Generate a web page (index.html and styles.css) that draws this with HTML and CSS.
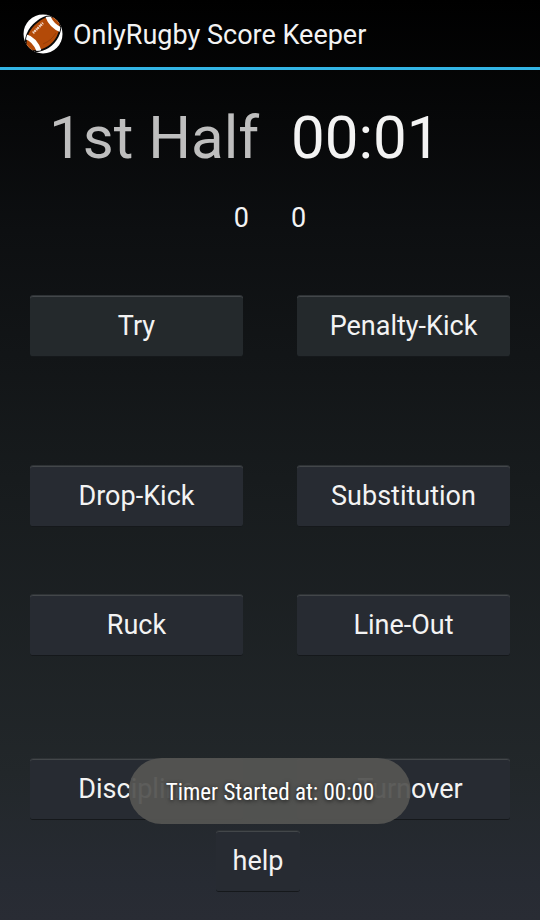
FILE: index.html
```html
<!DOCTYPE html>
<html lang="en">
<head>
<meta charset="utf-8">
<meta name="viewport" content="width=device-width, initial-scale=1">
<title>OnlyRugby Score Keeper</title>
<link rel="stylesheet" href="styles.css">
</head>
<body>
<header class="bar">
  <svg class="logo" viewBox="0 0 40 40" aria-hidden="true">
    <defs>
      <clipPath id="disc"><circle cx="20" cy="20" r="19.5"/></clipPath>
      <clipPath id="ball"><path d="M4 35C0 25 6 14 14 8C21 2 29 1 36 5C40 14 35 25 28 31C21 37 11 39 4 35Z"/></clipPath>
    </defs>
    <circle cx="20" cy="20" r="19.5" fill="#fff"/>
    <g clip-path="url(#disc)">
      <path d="M4 35C0 25 6 14 14 8C21 2 29 1 36 5C40 14 35 25 28 31C21 37 11 39 4 35Z" fill="#b34a08" stroke="#0a0a0a" stroke-width="1.8"/>
      <g clip-path="url(#ball)" fill="none">
        <path d="M1 22Q13 25 17 40" stroke="#fff" stroke-width="5"/>
        <path d="M24 0Q28 13 41 17" stroke="#fff" stroke-width="5"/>
        <path d="M20 30Q28 27 33 19" stroke="#8b3a08" stroke-width=".7"/>
      </g>
    </g>
    <path d="M10 19L20 9" stroke="#f0d2c0" stroke-width="2.6" stroke-dasharray="1.4 .8"/>
    <path d="M10 19L20 9" stroke="#f0d2c0" stroke-width=".8"/>
  </svg>
  <h1 class="title">OnlyRugby Score Keeper</h1>
</header>
<main class="board">
  <div class="clock">
    <span class="period">1st Half</span>
    <time class="time">00:01</time>
  </div>
  <div class="score"><span>0</span><span>0</span></div>
  <div class="row row-top">
    <button class="btn btn-top" type="button">Try</button>
    <button class="btn btn-top" type="button">Penalty-Kick</button>
  </div>
  <div class="row row-kick">
    <button class="btn" type="button">Drop-Kick</button>
    <button class="btn" type="button">Substitution</button>
  </div>
  <div class="row row-play">
    <button class="btn" type="button">Ruck</button>
    <button class="btn" type="button">Line-Out</button>
  </div>
  <div class="row row-last">
    <button class="btn" type="button">Discipline</button>
    <button class="btn" type="button">&nbsp; Turnover</button>
  </div>
  <button class="btn btn-help" type="button">help</button>
</main>
<div class="toast" role="status">Timer Started at: 00:00</div>
</body>
</html>
```
FILE: styles.css
```css
* {
  box-sizing: border-box;
}

body {
  position: relative;
  min-height: 100vh;
  margin: 0;
  background: linear-gradient(#000 0%, #0d0f11 25%, #171b1d 52%, #22272a 84%, #272b33 96%, #292c34 100%);
  color: #f3f3f3;
  font: 27px/32px Roboto, sans-serif;
}

.bar {
  display: flex;
  align-items: center;
  gap: 10px;
  height: 70px;
  padding: 1px 23px 0;
  border-bottom: 3px solid #33b5e5;
}

.logo {
  width: 40px;
  height: 40px;
}

.title {
  margin: 0;
  padding-top: 2px;
  font-size: 27px;
  font-weight: 400;
}

.board {
  padding: 32px 30px 28px;
}

.clock {
  display: flex;
  gap: 32px;
  padding-left: 19px;
  font-size: 60px;
  line-height: 72px;
}

.period {
  color: #bebebe;
}

.score {
  display: flex;
  justify-content: center;
  gap: 42px;
  margin: 28px 0 61px;
}

.row {
  display: grid;
  grid-template-columns: 1fr 1fr;
  gap: 54px;
}

.row-top {
  margin-bottom: 108px;
}

.row-kick {
  margin-bottom: 67px;
}

.row-play {
  margin-bottom: 102px;
}

.row-last {
  margin-bottom: 10px;
}

.btn {
  height: 62px;
  padding: 0 17px;
  border: 0;
  border-top: 1px solid #2e3235;
  border-bottom: 1px solid #15181b;
  border-radius: 3px;
  background: #272b32;
  box-shadow: inset 0 1px #43474a;
  color: inherit;
  font: inherit;
}

.btn-top {
  background: #24292c;
}

.btn-help {
  display: block;
  margin: 0 auto;
  transform: translateX(-12px);
}

.toast {
  position: absolute;
  bottom: 96px;
  left: 50%;
  transform: translateX(-50%);
  padding: 20px 37px 16px;
  border-radius: 33px;
  background: rgba(84, 84, 82, 0.95);
  color: #fff;
  font: 400 23px/30px "Roboto Condensed", Roboto, sans-serif;
  white-space: nowrap;
  text-shadow: 0 1px 4px rgba(0, 0, 0, 0.75);
}
```
